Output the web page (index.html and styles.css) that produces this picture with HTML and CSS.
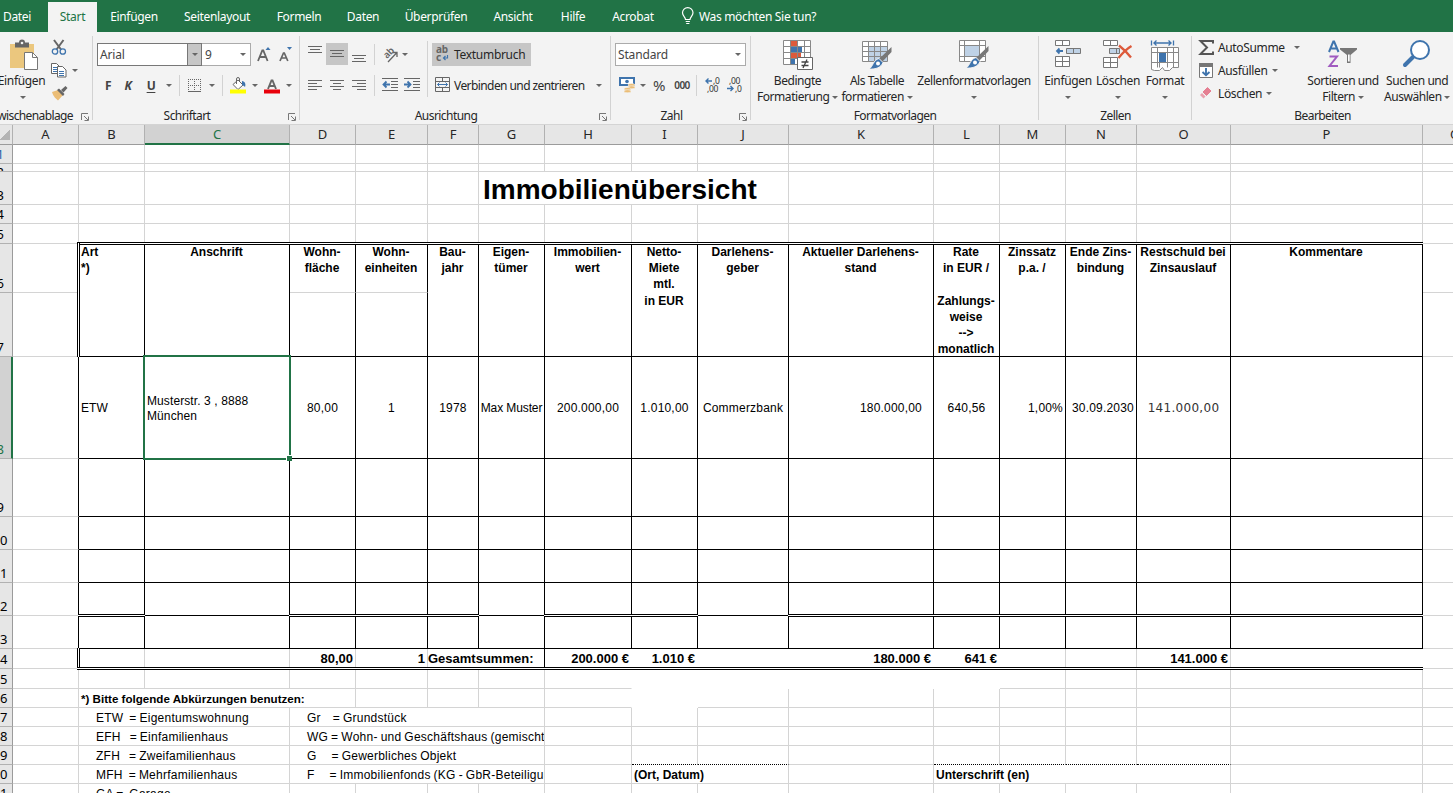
FILE: index.html
```html
<!DOCTYPE html>
<html lang="de">
<head>
<meta charset="utf-8">
<title>Immobilienübersicht</title>
<link rel="stylesheet" href="styles.css">
</head>
<body>
<nav class="tabs">
  <span class="tab t-datei">Datei</span><span class="tab t-start active">Start</span><span class="tab t-einf">Einfügen</span><span class="tab t-seite">Seitenlayout</span><span class="tab t-form">Formeln</span><span class="tab t-daten">Daten</span><span class="tab t-ueber">Überprüfen</span><span class="tab t-ans">Ansicht</span><span class="tab t-hilfe">Hilfe</span><span class="tab t-acro">Acrobat</span>
  <span class="tell"><svg width="14" height="18" viewBox="0 0 14 18" fill="none" stroke="#fff" stroke-width="1.2"><path d="M4.5 12.500C4.500 10 1.500 9 1.500 5.800a5 5 0 0 1 10.500 0C12 9 9 10 9 12.500zM4.700 14.500h4.200M5.200 16.500h3.200"/></svg><span>Was möchten Sie tun?</span></span>
</nav>

<div class="ribbon">
  <section class="group g-clip">
    <div class="body">
      <div class="big b-paste">
        <svg width="30" height="31" viewBox="0 0 30 31"><path d="M2 4h24v24H2z" fill="#ebc77e"/><path d="M7 2.500h4a3 3 0 0 1 6 0h4v5H7z" fill="#666"/><circle cx="14" cy="3" r="1.300" fill="#f3f3f3"/><path d="M16.500 12.500h8l5 5v12h-13z" fill="#fff" stroke="#777"/><path d="M24.500 12.500v5h5" fill="none" stroke="#777"/></svg>
        <span>Einfügen</span><i class="arr"></i>
      </div>
      <div class="stack">
        <div class="srow"><svg width="16" height="17" viewBox="0 0 16 17" fill="none"><path d="M3 1l7 9.500M12.500 1L5.500 10.500" stroke="#666" stroke-width="2"/><circle cx="4" cy="12.500" r="2.700" stroke="#3f74ad" stroke-width="1.300"/><circle cx="11.800" cy="12.500" r="2.700" stroke="#3f74ad" stroke-width="1.300"/></svg></div>
        <div class="srow"><svg width="16" height="15" viewBox="0 0 16 15" fill="#fff" stroke="#666"><path d="M.5.5h5l3 3v7h-8z"/><path d="M2 4.500h4M2 6.500h4M2 8.500h4" stroke="#3f74ad"/><path d="M6.500 3.500h5l3.500 3.500v7h-8.500z"/><path d="M8 8.500h5M8 10.500h5M8 12.500h5" stroke="#3f74ad"/></svg><i class="arr"></i></div>
        <div class="srow"><svg width="17" height="15" viewBox="0 0 17 15"><path d="M1 6l6-2 5 5-5 5.500C5 12.500 2.500 11 1 6z" fill="#ebbd76"/><path d="M6 4l2-1.500 5.500 5.500-1.500 2zM10 4l4.500-4 2 2-4 4.500z" fill="#666"/></svg></div>
      </div>
    </div>
    <footer><span class="cliplabel">Zwischenablage</span><svg class="launch" viewBox="0 0 8 8"><path d="M.5 7V.5H7M3 3l4 4M7.500 3.500v4h-4" fill="none" stroke="#777"/></svg></footer>
  </section>

  <section class="group g-font">
    <div class="body rows">
      <div class="line">
        <div class="combo c-font"><span>Arial</span><b><i class="arr"></i></b></div>
        <div class="combo c-size"><span>9</span><i class="arr"></i></div>
        <svg class="grow" width="16" height="18" viewBox="0 0 16 18"><path d="M1 16L5.300 5.500h1L10.600 16M2.700 12h6.200" fill="none" stroke="#666" stroke-width="1.800"/><path d="M8.500 5L11 2l2.500 3z" fill="#3f74ad"/></svg>
        <svg width="14" height="18" viewBox="0 0 14 18"><path d="M1 16L4.500 8h.8L8.800 16M2.500 13h5" fill="none" stroke="#666" stroke-width="1.700"/><path d="M8 2h5l-2.500 3z" fill="#3f74ad"/></svg>
      </div>
      <div class="line">
        <span class="slot w20 bold">F</span><span class="slot w20 bold ital">K</span><span class="slot w26 bold under">U</span><span class="slot w9"><i class="arr"></i></span><span class="slot w13"><i class="sep"></i></span>
        <span class="slot w17"><svg width="13" height="13" viewBox="0 0 13 13" fill="none" stroke="#666"><path d="M0 .5h13M0 6.500h13M.5 0v12M6.500 0v12M12.500 0v12" stroke-dasharray="1 1"/><path d="M0 12.500h13"/></svg></span><span class="slot w17"><i class="arr"></i></span><span class="slot w5"><i class="sep"></i></span>
        <span class="slot w26"><svg width="17" height="17" viewBox="0 0 17 17"><path d="M3 7.500L8 3l5 5-5 4.500z" fill="#fff" stroke="#666"/><path d="M6.500 7V2a1.500 1.500 0 0 1 3 0v3" fill="none" stroke="#666"/><path d="M12 4c3 .5 4 3 3 6-1-1-2-2-3-2z" fill="#3f74ad"/><path d="M0 12.500h16v4H0z" fill="#ff0"/></svg></span><span class="slot w8"><i class="arr"></i></span>
        <span class="slot w25"><svg width="16" height="17" viewBox="0 0 16 17"><path d="M4 12L7.500 3.500h1L12 12M5.500 9h5" fill="none" stroke="#666" stroke-width="1.900"/><path d="M0 12.500h16v4H0z" fill="#e8000b"/></svg></span><span class="slot w9"><i class="arr"></i></span>
      </div>
    </div>
    <footer><span>Schriftart</span><svg class="launch" viewBox="0 0 8 8"><path d="M.5 7V.5H7M3 3l4 4M7.500 3.500v4h-4" fill="none" stroke="#777"/></svg></footer>
  </section>

  <section class="group g-align">
    <div class="body">
      <div class="rows a-left">
        <div class="line">
          <span class="slot w22"><svg width="14" height="22" viewBox="0 0 14 22" stroke="#666"><path d="M0 3.500h14M2 6.500h10M0 9.500h14"/></svg></span>
          <span class="slot w22 on"><svg width="14" height="22" viewBox="0 0 14 22" stroke="#666"><path d="M0 7.500h14M2 10.500h10M0 13.500h14"/></svg></span>
          <span class="slot w22"><svg width="14" height="22" viewBox="0 0 14 22" stroke="#666"><path d="M0 12.500h14M2 15.500h10M0 18.500h14"/></svg></span>
          <span class="slot w9"><i class="sep"></i></span>
          <span class="slot w22"><svg width="18" height="18" viewBox="0 0 18 18"><text class="ab thin" transform="translate(6 14) rotate(-45)">ab</text><path d="M7 17L15.500 8M11.500 7.500h4.500v4.500" fill="none" stroke="#666" stroke-width="1.300"/></svg></span><span class="slot w7"><i class="arr"></i></span>
        </div>
        <div class="line">
          <span class="slot w22"><svg width="14" height="12" viewBox="0 0 14 12" stroke="#666"><path d="M0 1.500h14M0 4.500h9M0 7.500h14M0 10.500h9"/></svg></span>
          <span class="slot w22"><svg width="14" height="12" viewBox="0 0 14 12" stroke="#666"><path d="M0 1.500h14M3 4.500h8M0 7.500h14M3 10.500h8"/></svg></span>
          <span class="slot w22"><svg width="14" height="12" viewBox="0 0 14 12" stroke="#666"><path d="M0 1.500h14M5 4.500h9M0 7.500h14M5 10.500h9"/></svg></span>
          <span class="slot w9"><i class="sep"></i></span>
          <span class="slot w22"><svg width="16" height="14" viewBox="0 0 16 14" stroke="#666"><path d="M0 .5h16M9 3.500h7M9 6.500h7M9 9.500h7M0 12.500h16"/><path d="M8 6.500H1.500M4.500 3.500l-3 3 3 3" fill="none" stroke="#3f74ad" stroke-width="1.800"/></svg></span>
          <span class="slot w22"><svg width="16" height="14" viewBox="0 0 16 14" stroke="#666"><path d="M0 .5h16M9 3.500h7M9 6.500h7M9 9.500h7M0 12.500h16"/><path d="M0 6.500h6.500M3.500 3.500l3 3-3 3" fill="none" stroke="#3f74ad" stroke-width="1.800"/></svg></span>
        </div>
      </div>
      <i class="sep tall-sep"></i>
      <div class="rows a-right">
        <div class="line"><span class="wrap on"><svg width="14" height="18" viewBox="0 0 14 18"><text x="0" y="8" class="ab">ab</text><text x="0" y="16" class="ab">c</text><path d="M11.500 10v3H7.500M9.500 11l-2 2 2 2" fill="none" stroke="#3f74ad" stroke-width="1.200"/></svg><span>Textumbruch</span></span></div>
        <div class="line merge"><svg width="15" height="16" viewBox="0 0 15 16" fill="none" stroke="#666"><path d="M.5.5h14v14H.5zM.5 4.500h14M.5 10.500h14M7.500 .5v4M7.500 10.500v4"/><path d="M2.500 7.500h10M4.500 5.500l-2 2 2 2M10.500 5.500l2 2-2 2" stroke="#3f74ad"/></svg><span>Verbinden und zentrieren</span><i class="arr"></i></div>
      </div>
    </div>
    <footer><span>Ausrichtung</span><svg class="launch" viewBox="0 0 8 8"><path d="M.5 7V.5H7M3 3l4 4M7.500 3.500v4h-4" fill="none" stroke="#777"/></svg></footer>
  </section>

  <section class="group g-num">
    <div class="body rows">
      <div class="line"><div class="combo c-num"><span>Standard</span><i class="arr"></i></div></div>
      <div class="line">
        <span class="slot w24"><svg width="17" height="16" viewBox="0 0 17 16"><path d="M1 1h14v7H1z" fill="#fff" stroke="#3f74ad" stroke-width="2"/><circle cx="8" cy="4.500" r="1.800" fill="#3f74ad"/><g fill="#ebbd76" stroke="#f3f3f3" stroke-width=".6"><ellipse cx="12.500" cy="8" rx="3.500" ry="1.500"/><ellipse cx="12.500" cy="10.300" rx="3.500" ry="1.500"/><ellipse cx="8.500" cy="12" rx="3.500" ry="1.500"/><ellipse cx="8.500" cy="14.200" rx="3.500" ry="1.500"/></g></svg></span><span class="slot w7"><i class="arr"></i></span>
        <span class="slot w26 pct">%</span><span class="slot w20 zeros">000</span><span class="slot w9"><i class="sep"></i></span>
        <span class="slot w22"><svg width="15" height="16" viewBox="0 0 15 16"><text x="8" y="7" class="dec">,0</text><text x="2" y="15" class="dec">,00</text><path d="M7 4H1M3.500 1.500L1 4l2.500 2.500" fill="none" stroke="#3f74ad" stroke-width="1.400"/></svg></span>
        <span class="slot w22"><svg width="15" height="16" viewBox="0 0 15 16"><text x="2" y="7" class="dec">,00</text><text x="8" y="15" class="dec">,0</text><path d="M0 11.500h6M3.500 9L6 11.500 3.500 14" fill="none" stroke="#3f74ad" stroke-width="1.400"/></svg></span>
      </div>
    </div>
    <footer><span>Zahl</span><svg class="launch" viewBox="0 0 8 8"><path d="M.5 7V.5H7M3 3l4 4M7.500 3.500v4h-4" fill="none" stroke="#777"/></svg></footer>
  </section>

  <section class="group g-styles">
    <div class="body">
      <div class="big b-cond">
        <svg width="30" height="31" viewBox="0 0 30 31"><path d="M.5.5h27v24H.5z" fill="#fff"/><path d="M8 1h7v5H8zM8 13h10v5H8z" fill="#dd5a3b"/><path d="M8 7h11v5H8zM8 19h4v5H8z" fill="#3f74ad"/><path d="M.5.500h27v24H.500zM.500 6.500h27M.500 12.500h27M.500 18.500h27M7.500.500v24M14.500.500v24M21.500.500v24" fill="none" stroke="#888"/><path d="M14.500 17.500h15v12h-15z" fill="#fff" stroke="#666"/><path d="M18.500 22h7M18.500 25.500h7M24 19.500l-4 8.500" stroke="#444" stroke-width="1.300"/></svg>
        <span>Bedingte</span><span>Formatierung <i class="arr"></i></span>
      </div>
      <div class="big b-tab">
        <svg width="30" height="30" viewBox="0 0 30 30"><path d="M.5 1.500h25v20H.5z" fill="#fff"/><path d="M7 7h18v14H7z" fill="#bfd2e6"/><path d="M.5 1.500h25v20H.5zM.5 6.500h25M.5 11.500h25M.5 16.500h25M6.500 1.500v20M12.500 1.500v20M18.500 1.500v20" fill="none" stroke="#888"/><path d="M29.500 7v5L20 22l-3-3z" fill="#777"/><path d="M17 18.500l4 4c-2 5-7 7-14 6.500 4-2 4-9 10-10.500z" fill="#3f74ad" stroke="#f3f3f3"/><circle cx="16" cy="23.500" r="2" fill="#fff"/></svg>
        <span>Als Tabelle</span><span>formatieren <i class="arr"></i></span>
      </div>
      <div class="big b-cell">
        <svg width="30" height="30" viewBox="0 0 30 30"><path d="M.5.5h26v21H.5z" fill="#fff" stroke="#888"/><path d="M.5 5.500h26M.5 16.500h26M5.500.5v21M20.500.5v21" fill="none" stroke="#888"/><path d="M6 6h14v10H6z" fill="#bfd2e6"/><path d="M29.500 6v5L20 21l-3-3z" fill="#777"/><path d="M17 17.500l4 4c-2 5-7 7-14 6.500 4-2 4-9 10-10.500z" fill="#3f74ad" stroke="#f3f3f3"/><circle cx="16" cy="22.500" r="2" fill="#fff"/></svg>
        <span>Zellenformatvorlagen</span><i class="arr"></i>
      </div>
    </div>
    <footer><span>Formatvorlagen</span></footer>
  </section>

  <section class="group g-cells">
    <div class="body">
      <div class="big b-ins">
        <svg width="26" height="29" viewBox="0 0 26 29" fill="#fff" stroke="#777"><path d="M.5.500h14v5H.500zM7.500.500v5M.500 16.500h14v10H.500zM7.500 16.500v10M.500 21.500h14"/><path d="M11.500 8.500h14v5h-14zM18.500 8.500v5" fill="#bfd2e6"/><path d="M8 11H2M4.500 8.500L2 11l2.500 2.500" fill="none" stroke="#3f74ad" stroke-width="1.800"/></svg>
        <span>Einfügen</span><i class="arr"></i>
      </div>
      <div class="big b-del">
        <svg width="30" height="29" viewBox="0 0 30 29" fill="#fff" stroke="#777"><path d="M.5.500h14v5H.500zM7.500.500v5M.500 17.500h14v10H.500zM7.500 17.500v10M.500 22.500h14"/><path d="M6.500 8.500h10v5h-10zM13.500 8.500v5" fill="#bfd2e6"/><path d="M16 5.500c4 3 8 7 12 12M28.500 6c-5 3-9 7-13 12" fill="none" stroke="#dd5a3b" stroke-width="2.300"/></svg>
        <span>Löschen</span><i class="arr"></i>
      </div>
      <div class="big b-fmt">
        <svg width="29" height="32" viewBox="0 0 29 32" fill="#fff" stroke="#888"><path d="M.5 7.500h27v20h-6l-3 3h-5l-2-3-3 3h-5l-3-1z"/><path d="M.5 12.500h27M.5 22.500h27M6.500 7.500v20M8.500 12.500v15M16.500 7.500v20M22.500 7.500v20" fill="none"/><path d="M8 13h7v9H8z" fill="#3f74ad" stroke="none"/><path d="M.5.5v5M22.500.5v5M2.500 3h18M5.500.5L3 3l2.500 2.500M17.500.5L20 3l-2.500 2.500" fill="none" stroke="#3f74ad" stroke-width="1.300"/></svg>
        <span>Format</span><i class="arr"></i>
      </div>
    </div>
    <footer><span>Zellen</span></footer>
  </section>

  <section class="group g-edit">
    <div class="body">
      <div class="stack e-stack">
        <div class="erow"><svg width="15" height="15" viewBox="0 0 15 15" fill="none" stroke="#555" stroke-width="2"><path d="M14 3.500V1H1.500l6.500 6.500L1.500 14H14v-2.500"/></svg><span>AutoSumme</span><i class="arr far"></i></div>
        <div class="erow"><svg width="15" height="15" viewBox="0 0 15 15"><path d="M.5 1.500h13v13H.5z" fill="#fff" stroke="#777"/><path d="M0 0h14v4H0z" fill="#777"/><path d="M7 5v7M3.500 9L7 12.300 10.500 9" fill="none" stroke="#3f74ad" stroke-width="1.900"/></svg><span>Ausfüllen</span><i class="arr"></i></div>
        <div class="erow"><svg width="15" height="15" viewBox="0 0 15 15"><path d="M8.500 1.500L12 5 7.500 9.500 4 6z" fill="#e57f92" stroke="#e57f92"/><path d="M3 7l3.500 3.500-2 2L1 9z" fill="#eaa0ae"/></svg><span>Löschen</span><i class="arr"></i></div>
      </div>
      <div class="big b-sort">
        <svg width="30" height="29" viewBox="0 0 30 29"><path d="M1 12L5.300 1.500h.8L10.500 12M2.700 8.500h6" fill="none" stroke="#3f74ad" stroke-width="2"/><path d="M1.500 16.500h7.500L1.500 26H10" fill="none" stroke="#a05bc0" stroke-width="2"/><path d="M12 8h17v1.500L22.500 15v8h-3.500v-8L12 9.500z" fill="#777"/><path d="M20 14.500h1.700v7H20z" fill="#fff"/></svg>
        <span>Sortieren und</span><span>Filtern <i class="arr"></i></span>
      </div>
      <div class="big b-find">
        <svg width="28" height="29" viewBox="0 0 28 29"><path d="M10 17L2 25" stroke="#3f74ad" stroke-width="4" stroke-linecap="round"/><circle cx="17" cy="10" r="9" fill="#fff" stroke="#3f74ad" stroke-width="2"/></svg>
        <span>Suchen und</span><span>Auswählen <i class="arr"></i></span>
      </div>
    </div>
    <footer><span>Bearbeiten</span></footer>
  </section>
</div>

<div class="colheads">
  <span class="corner"></span><span>A</span><span>B</span><span class="sel">C</span><span>D</span><span>E</span><span>F</span><span>G</span><span>H</span><span>I</span><span>J</span><span>K</span><span>L</span><span>M</span><span>N</span><span>O</span><span>P</span><span class="q">Q</span>
</div>

<main class="sheet">
  <div class="row"><span class="rn blue"><em>1</em></span><div></div><div></div><div></div><div></div><div></div><div></div><div></div><div></div><div></div><div></div><div></div><div></div><div></div><div></div><div></div><div></div><div></div></div>
  <div class="row"><span class="rn low"><em>2</em></span><div></div><div></div><div></div><div></div><div></div><div></div><div></div><div></div><div></div><div></div><div></div><div></div><div></div><div></div><div></div><div></div><div></div></div>
  <div class="row"><span class="rn"><em>3</em></span><div></div><div></div><div></div><div></div><div></div><div></div><div class="span4 title">Immobilienübersicht</div><div></div><div></div><div></div><div></div><div></div><div></div><div></div></div>
  <div class="row"><span class="rn"><em>4</em></span><div></div><div></div><div></div><div></div><div></div><div></div><div></div><div></div><div></div><div></div><div></div><div></div><div></div><div></div><div></div><div></div><div></div></div>
  <div class="row"><span class="rn"><em>5</em></span><div></div><div class="dbl start"></div><div class="dbl"></div><div class="dbl"></div><div class="dbl"></div><div class="dbl"></div><div class="dbl"></div><div class="dbl"></div><div class="dbl"></div><div class="dbl"></div><div class="dbl"></div><div class="dbl"></div><div class="dbl"></div><div class="dbl"></div><div class="dbl"></div><div class="dbl"></div><div></div></div>
  <div class="row boxed head"><span class="rn"><em>6</em></span><div class="a"></div><div class="tall left dleft">Art<br>*)</div><div class="tall">Anschrift</div><div class="faint">Wohn-<br>fläche</div><div class="faint">Wohn-<br>einheiten</div><div class="tall">Bau-<br>jahr</div><div class="tall">Eigen-<br>tümer</div><div class="tall">Immobilien-<br>wert</div><div class="tall">Netto-<br>Miete<br>mtl.<br>in EUR</div><div class="tall">Darlehens-<br>geber</div><div class="tall">Aktueller Darlehens-<br>stand</div><div class="tall">Rate<br>in EUR /<br><br>Zahlungs-<br>weise<br>--&gt;<br>monatlich</div><div class="tall">Zinssatz<br>p.a. /</div><div class="tall">Ende Zins-<br>bindung</div><div class="tall">Restschuld bei<br>Zinsauslauf</div><div class="tall">Kommentare</div><div class="q"></div></div>
  <div class="row boxed"><span class="rn"><em>7</em></span><div class="a"></div><div></div><div></div><div class="q"></div></div>
  <div class="row boxed data"><span class="rn sel"><em>8</em></span><div class="a"></div><div class="left">ETW</div><div class="left cursor">Musterstr. 3 , 8888<br>München</div><div>80,00</div><div>1</div><div>1978</div><div class="name">Max Muster</div><div>200.000,00</div><div>1.010,00</div><div class="bank">Commerzbank</div><div class="right indent">180.000,00</div><div>640,56</div><div class="right">1,00%</div><div class="right">30.09.2030</div><div class="verd">141.000,00</div><div></div><div class="q"></div></div>
  <div class="row boxed"><span class="rn"><em>9</em></span><div class="a"></div><div></div><div></div><div></div><div></div><div></div><div></div><div></div><div></div><div></div><div></div><div></div><div></div><div></div><div></div><div></div><div class="q"></div></div>
  <div class="row boxed"><span class="rn"><em>10</em></span><div class="a"></div><div></div><div></div><div></div><div></div><div></div><div></div><div></div><div></div><div></div><div></div><div></div><div></div><div></div><div></div><div></div><div class="q"></div></div>
  <div class="row boxed"><span class="rn"><em>11</em></span><div class="a"></div><div></div><div></div><div></div><div></div><div></div><div></div><div></div><div></div><div></div><div></div><div></div><div></div><div></div><div></div><div></div><div class="q"></div></div>
  <div class="row boxed"><span class="rn"><em>12</em></span><div class="a"></div><div class="dbl"></div><div></div><div class="dbl"></div><div class="dbl"></div><div class="dbl"></div><div></div><div class="dbl"></div><div class="dbl"></div><div></div><div class="dbl"></div><div class="dbl"></div><div class="dbl"></div><div class="dbl"></div><div class="dbl"></div><div class="dbl"></div><div class="q"></div></div>
  <div class="row boxed"><span class="rn"><em>13</em></span><div class="a"></div><div></div><div></div><div></div><div></div><div></div><div></div><div></div><div></div><div></div><div></div><div></div><div></div><div></div><div></div><div></div><div class="q"></div></div>
  <div class="row sums"><span class="rn"><em>14</em></span><div></div><div class="dbl start dleft"></div><div class="dbl"></div><div class="dbl">80,00</div><div class="dbl">1</div><div class="dbl span2 left rule">Gesamtsummen:</div><div class="dbl open">200.000 €</div><div class="dbl open">1.010 €</div><div class="dbl open"></div><div class="dbl open">180.000 €</div><div class="dbl open">641 €</div><div class="dbl"></div><div class="dbl"></div><div class="dbl">141.000 €</div><div class="dbl open"></div><div></div></div>
  <div class="row"><span class="rn"><em>15</em></span><div></div><div></div><div></div><div></div><div></div><div></div><div></div><div class="open"></div><div class="bare"></div><div class="bare"></div><div class="bare"></div><div class="bare"></div><div></div><div></div><div></div><div></div><div></div></div>
  <div class="row"><span class="rn"><em>16</em></span><div></div><div class="span3 note">*) Bitte folgende Abkürzungen benutzen:</div><div></div><div></div><div></div><div class="open"></div><div class="bare"></div><div></div><div></div><div></div><div></div><div></div><div></div><div></div><div></div></div>
  <div class="row legend"><span class="rn"><em>17</em></span><div></div><div class="span2">ETW  = Eigentumswohnung</div><div class="span4">Gr    = Grundstück</div><div></div><div></div><div></div><div></div><div></div><div></div><div></div><div></div><div></div><div></div></div>
  <div class="row legend"><span class="rn"><em>18</em></span><div></div><div class="span2">EFH   = Einfamilienhaus</div><div class="span4">WG = Wohn- und Geschäftshaus (gemischt)</div><div></div><div></div><div></div><div></div><div></div><div></div><div></div><div></div><div></div><div></div></div>
  <div class="row legend"><span class="rn"><em>19</em></span><div></div><div class="span2">ZFH   = Zweifamilienhaus</div><div class="span4">G     = Gewerbliches Objekt</div><div></div><div class="dots"></div><div class="dots"></div><div></div><div class="dots"></div><div class="dots"></div><div class="dots"></div><div class="dots"></div><div></div><div></div></div>
  <div class="row legend"><span class="rn"><em>20</em></span><div></div><div class="span2">MFH  = Mehrfamilienhaus</div><div class="span4">F     = Immobilienfonds (KG - GbR-Beteiligung)</div><div></div><div class="span2 sign">(Ort, Datum)</div><div></div><div class="span4 sign">Unterschrift (en)</div><div></div><div></div></div>
  <div class="row legend"><span class="rn"><em>21</em></span><div></div><div class="span2">GA =  Garage</div><div></div><div></div><div></div><div></div><div></div><div></div><div></div><div></div><div></div><div></div><div></div><div></div><div></div><div></div></div>
</main>
</body>
</html>
```
FILE: styles.css
```css
*, *::before, *::after { box-sizing: border-box; }
body { margin: 0; width: 1453px; height: 793px; overflow: hidden; background: #fff; font: 12px "Noto Sans", "Open Sans", sans-serif; color: #262626; }
svg { display: block; flex: none; overflow: visible; }
i, em { font-style: normal; }

/* tab strip */
.tabs { display: flex; height: 32px; background: #217346; color: #fff; align-items: flex-end; letter-spacing: -.33px; white-space: nowrap; }
.tab { height: 30px; line-height: 30px; text-align: center; flex: none; }
.tab.active { background: #f3f3f3; color: #217346; }
.t-datei { width: 48px; padding-right: 14px; }
.t-start { width: 49px; }
.t-einf { width: 74px; }
.t-seite { width: 92px; }
.t-form { width: 72px; }
.t-daten { width: 56px; }
.t-ueber { width: 90px; }
.t-ans { width: 64px; }
.t-hilfe { width: 56px; }
.t-acro { width: 64px; }
.tell { display: flex; height: 30px; padding-left: 16px; line-height: 30px; gap: 4px; }
.tell svg { margin-top: 5px; }

/* ribbon */
.ribbon { display: flex; height: 92px; background: #f3f3f3; letter-spacing: -.36px; white-space: nowrap; }
.group { position: relative; display: flex; flex-direction: column; flex: none; }
.group:not(:last-child)::after { content: ""; position: absolute; right: 0; top: 4px; width: 1px; height: 84px; background: #d2d2d2; }
.g-clip { width: 93px; }
.g-font { width: 207px; }
.g-align { width: 311px; }
.g-num { width: 140px; }
.g-styles { width: 288px; }
.g-cells { width: 153px; }
.g-edit { width: 261px; }
.body { display: flex; height: 75px; }
.group footer { display: flex; height: 17px; line-height: 18px; letter-spacing: -.55px; }
.group footer span { flex: 1; text-align: center; }
.group footer .cliplabel { flex: none; width: 83px; margin-left: -9px; text-align: left; letter-spacing: -.62px; }
.launch { width: 8px; height: 8px; margin: 6px 4px 0 7px; }
.arr { display: inline-block; flex: none; border: 3px solid transparent; border-top-color: #666; border-bottom: 0; vertical-align: middle; }
.sep { width: 1px; height: 21px; background: #d2d2d2; }
.tall-sep { height: 56px; margin-top: 9px; flex: none; }
.rows { flex-direction: column; display: flex; padding-top: 11px; gap: 9px; }
.line { display: flex; height: 22px; align-items: center; }
.slot { display: flex; flex: none; height: 22px; align-items: center; justify-content: center; }
.w5 { width: 5px; } .w7 { width: 7px; } .w8 { width: 8px; } .w9 { width: 9px; } .w13 { width: 13px; }
.w17 { width: 17px; } .w20 { width: 20px; } .w22 { width: 22px; } .w24 { width: 24px; } .w25 { width: 25px; } .w26 { width: 26px; }
.on { background: #c6c6c6; }
.bold { font-weight: 700; color: #444; }
.ital { font-style: italic; }
.under { text-decoration: underline; text-underline-offset: 2px; }
.combo { display: flex; align-items: center; height: 23px; border: 1px solid #ababab; background: #fff; padding: 0 4px 0 2px; color: #444; justify-content: space-between; letter-spacing: -.15px; }
.c-font { width: 105px; padding-right: 0; border-color: #777; }
.c-font b { display: flex; align-items: center; justify-content: center; width: 14px; height: 21px; background: #c6c6c6; border-left: 1px solid #777; }
.c-size { width: 49px; border-left: 0; padding-left: 3px; }
.c-num { width: 131px; }
.g-font .rows { padding-left: 4px; }
.g-font .rows, .g-font > .body { padding-left: 4px; }
.g-font .line + .line { padding-left: 1px; }
.grow { margin: 0 6px 0 6px; }
.g-align .a-left { padding-left: 4px; width: 127px; }
.g-align .a-right { padding-left: 4px; }
.wrap { display: flex; align-items: center; width: 99px; height: 23px; padding-left: 4px; gap: 4px; letter-spacing: -.3px; }
.merge { padding-left: 3px; gap: 4px; letter-spacing: -.58px; }
.merge .arr { margin-left: 7px; }
.ab { font: 700 10px "Noto Sans", sans-serif; fill: #666; }
.thin { font-weight: 600; font-size: 9.500px; letter-spacing: -.3px; }
.dec { font: 8.500px "Noto Sans", sans-serif; fill: #333; letter-spacing: -.3px; }
.g-num > .body { padding-left: 4px; }
.pct { font-size: 15px; color: #444; }
.zeros { font-size: 10px; font-weight: 600; color: #444; letter-spacing: -.6px; }
.big { display: grid; grid-template-rows: 33px 16px 16px; justify-items: center; align-items: start; align-content: start; flex: none; padding-top: 8px; line-height: 16px; }
.big > .arr { margin-top: 7px; }
.b-paste { width: 46px; margin-right: -2px; }
.b-paste span { margin-left: -3px; }
.b-cond { width: 80px; margin-left: 6px; }
.b-cond, .b-tab { letter-spacing: -.45px; }
.b-tab { width: 72px; margin-left: 4px; }
.b-cell { width: 114px; margin-left: 4px; letter-spacing: -.45px; }
.b-ins { width: 50px; margin-left: 4px; }
.b-del { width: 50px; }
.b-fmt { width: 44px; }
.b-sort { width: 72px; margin-left: 4px; letter-spacing: -.45px; }
.b-find { width: 66px; margin-left: 5px; letter-spacing: -.45px; }
.stack { display: flex; flex-direction: column; padding: 4px 0 0 7px; }
.srow { display: flex; align-items: center; height: 23px; gap: 5px; }
.e-stack { width: 111px; }
.erow { display: flex; align-items: center; height: 23px; gap: 4px; }
.erow .far { margin-left: 5px; }

/* column heads and cell grid share the same tracks */
.colheads, .sheet { display: grid; grid-template-columns: 13px 66px 66px 145px 66px 72px 51px 66px 87px 66px 91px 145px 66px 66px 71px 94px 192px 31px; }
.colheads { height: 21px; background: #e6e6e6; border-top: 1px solid #d4d4d4; }
.colheads span { border-right: 1px solid #b1b1b1; border-bottom: 1px solid #9b9b9b; text-align: center; line-height: 19px; font-size: 13px; overflow: hidden; }
.colheads .corner { background: linear-gradient(135deg, transparent 50%, #b4b4b4 50%) 0 4px / 10px 11px no-repeat; }
.colheads .sel { background: #d2d2d2; color: #217346; border-bottom: 2px solid #217346; }
.colheads .q { padding-left: 27px; border-right: 0; text-align: left; }
.sheet { grid-template-rows: 19px 8px 33px 19px 20px 49px 64px 102px 58px 33px 33px 33px 33px 20px 20px 19px 19px 19px 19px 19px 19px; font: 12px "Liberation Sans", Arial, sans-serif; color: #000; white-space: pre; }
.row { display: contents; }
.row > div { position: relative; border-right: 1px solid #d4d4d4; border-bottom: 1px solid #d4d4d4; min-width: 0; }
.rn { grid-column: 1; display: flex; align-items: flex-end; background: #e6e6e6; border-right: 1px solid #9b9b9b; border-bottom: 1px solid #b1b1b1; overflow: hidden; font: 13px/17px "Noto Sans", sans-serif; letter-spacing: -.3px; }
.rn em { flex: none; width: 26px; margin-left: -13px; text-align: center; }
.rn.low { align-items: flex-start; }
.rn.blue { color: #2a62a8; }
.rn.sel { background: #d2d2d2; color: #217346; border-right: 2px solid #217346; }
.row > .span2 { grid-column: span 2; }
.row > .span3 { grid-column: span 3; }
.row > .span4 { grid-column: span 4; }
.row > .open { border-right-color: transparent; }
.row > .bare { border-color: transparent; }
.title { padding-left: 4px; font-size: 28px; font-weight: 700; line-height: 36px; }
.boxed > div { border-color: #000; text-align: center; }
.boxed > .a { border-bottom-color: #d4d4d4; }
.boxed > .q { border-color: #d4d4d4; }
.boxed > .faint { border-bottom-color: #d4d4d4; }
.tall { grid-row: span 2; }
.head > div { font-weight: 700; line-height: 16.200px; padding-right: 1px; }
.row > .left { text-align: left; padding-left: 2px; }
.row > .right { text-align: right; padding-right: 2px; }
.row > .indent { padding-right: 11px; }
.data > div { display: flex; align-items: center; justify-content: center; line-height: 15px; letter-spacing: .2px; padding-top: 2px; }
.data > .left { justify-content: flex-start; letter-spacing: .1px; }
.data > .right { justify-content: flex-end; }
.data > .name { letter-spacing: -.1px; }
.data > .bank { letter-spacing: .2px; }
.data > .verd { font-family: "DejaVu Sans", Verdana, sans-serif; color: #333; letter-spacing: .3px; }
.dbl::after { content: ""; position: absolute; z-index: 1; left: -1px; right: -1px; bottom: -2px; height: 3px; border: solid #000; border-width: 1px 0; background: #fff; }
.dbl.start::after { left: -2px; }
.dleft::before { content: ""; position: absolute; z-index: 1; left: -2px; top: -1px; bottom: -1px; width: 3px; border: solid #000; border-width: 0 1px; background: #fff; }
.cursor::before { content: ""; position: absolute; z-index: 2; inset: -2px; border: 2px solid #217346; }
.cursor::after { content: ""; position: absolute; z-index: 3; right: -3px; bottom: -3px; width: 6px; height: 6px; background: #217346; border: solid #fff; border-width: 1px 0 0 1px; }
.sums > div { text-align: right; padding-right: 2px; font-size: 13px; font-weight: 700; line-height: 19px; }
.row > .rule { border-right-color: #000; padding-left: 0; }
.note { padding-left: 2px; font-size: 11.600px; font-weight: 700; line-height: 20px; }
.legend > div { line-height: 20px; letter-spacing: .24px; word-spacing: -.6px; }
.legend > .span2, .legend > .span4 { padding-left: 17px; overflow: hidden; }
.row > .dots { border-bottom: 1px dotted #000; }
.legend > .sign { padding-left: 2px; font-weight: 700; letter-spacing: 0; word-spacing: 0; }
```
